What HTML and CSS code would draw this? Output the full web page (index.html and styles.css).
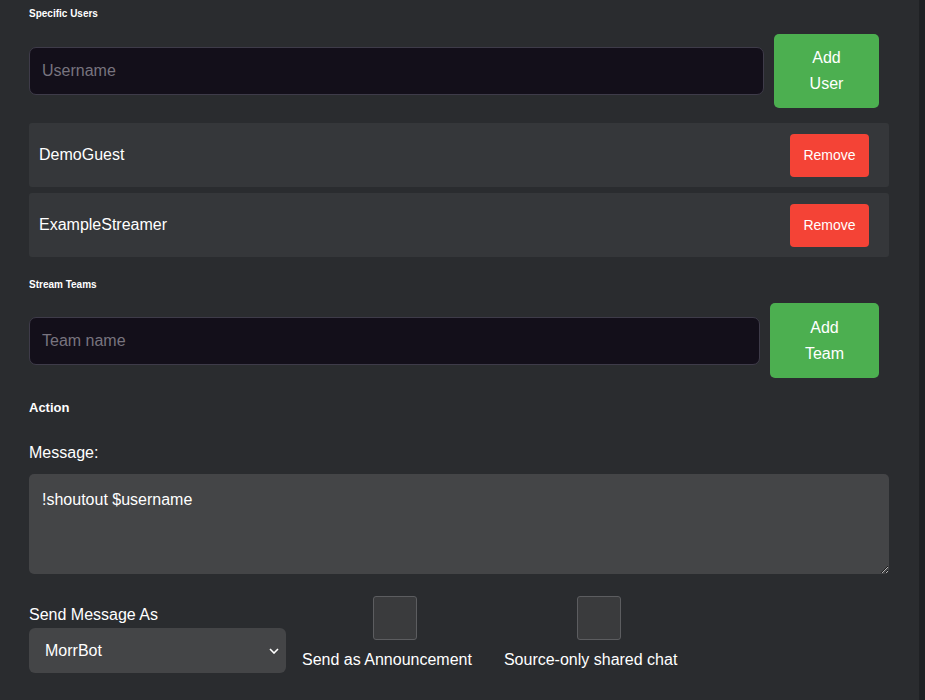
FILE: index.html
```html
<!DOCTYPE html>
<html lang="en">
<head>
    <meta charset="UTF-8">
    <title>shoutout settings</title>
    <link rel="stylesheet" href="styles.css">
</head>
<body>
    <div class="panel">
        <h4 class="section-label">Specific Users</h4>
        <div class="add-row">
            <input type="text" class="text-input" placeholder="Username">
            <button class="add-btn user-btn">Add User</button>
        </div>
        <ul class="entry-list">
            <li>
                <span>DemoGuest</span>
                <button class="remove-btn">Remove</button>
            </li>
            <li>
                <span>ExampleStreamer</span>
                <button class="remove-btn">Remove</button>
            </li>
        </ul>

        <h4 class="section-label teams-label">Stream Teams</h4>
        <div class="add-row">
            <input type="text" class="text-input" placeholder="Team name">
            <button class="add-btn team-btn">Add Team</button>
        </div>

        <h3 class="action-title">Action</h3>
        <label class="field-label" for="message">Message:</label>
        <textarea id="message" class="message-box">!shoutout $username</textarea>

        <div class="options-row">
            <div class="send-as">
                <label class="field-label" for="send-as">Send Message As</label>
                <div class="select-wrap">
                    <select id="send-as" class="select-box">
                        <option>MorrBot</option>
                    </select>
                    <svg class="chevron" width="10" height="6" viewBox="0 0 10 6">
                        <path d="M1 1l4 4 4-4" fill="none" stroke="#fff" stroke-width="1.6"/>
                    </svg>
                </div>
            </div>
            <label class="check-group">
                <input type="checkbox" class="check-box">
                <span>Send as Announcement</span>
            </label>
            <label class="check-group">
                <input type="checkbox" class="check-box">
                <span>Source-only shared chat</span>
            </label>
        </div>
    </div>
</body>
</html>
```

FILE: styles.css
```css
/*reset*/
* {
    padding: 0;
    margin: 0;
    box-sizing: border-box;
}
li {
    list-style: none;
}

/*default*/
body {
    font: 16px/1.2 "Liberation Sans", Arial, sans-serif;
    color: #fff;
    background-color: #1f2124;
    height: 700px;
    overflow: hidden;
}

/*main*/
.panel {
    width: 919px;
    height: 700px;
    background-color: #2a2c2f;
    padding: 8px 30px 0 29px;
}
.section-label {
    font-size: 10px;
    line-height: 12px;
    font-weight: bold;
    margin-bottom: 14px;
}
.teams-label {
    margin: 22px 0 12px;
}
.add-row {
    display: flex;
    align-items: center;
    width: 850px;
}
.text-input {
    flex: 1;
    height: 48px;
    background-color: #130f1a;
    border: 1px solid #3e3b49;
    border-radius: 7px;
    padding: 0 12px;
    font: 16px "Liberation Sans", Arial, sans-serif;
    color: #fff;
    outline: none;
}
.text-input::placeholder {
    color: #78747f;
}
.add-btn {
    margin-left: 10px;
    height: 74px;
    border: none;
    border-radius: 5px;
    background-color: #4caf50;
    color: #fff;
    font: 16px/26px "Liberation Sans", Arial, sans-serif;
    padding: 0 28px;
    text-align: center;
    cursor: pointer;
}
.user-btn {
    width: 105px;
}
.team-btn {
    width: 109px;
    height: 75px;
}
.entry-list {
    margin-top: 15px;
}
.entry-list li {
    display: flex;
    align-items: center;
    justify-content: space-between;
    height: 64px;
    margin-bottom: 6px;
    padding: 0 20px 0 10px;
    background-color: #35373a;
    border-radius: 3px;
}
.remove-btn {
    width: 79px;
    height: 43px;
    border: none;
    border-radius: 4px;
    background-color: #f44336;
    color: #fff;
    font: 14px "Liberation Sans", Arial, sans-serif;
    cursor: pointer;
}
.action-title {
    font-size: 13px;
    line-height: 16px;
    margin: 22px 0 28px;
}
.field-label {
    display: block;
    line-height: 18px;
}
.message-box {
    display: block;
    width: 860px;
    height: 100px;
    margin-top: 12px;
    background-color: #444547;
    border: none;
    border-radius: 5px;
    padding: 16px 13px;
    color: #fff;
    font: 16px/1.2 "Liberation Sans", Arial, sans-serif;
    outline: none;
}
.options-row {
    display: flex;
    align-items: flex-end;
    margin-top: 22px;
}
.send-as .field-label {
    margin-bottom: 4px;
}
.select-wrap {
    position: relative;
}
.select-box {
    display: block;
    width: 257px;
    height: 45px;
    appearance: none;
    background-color: #444547;
    border: none;
    border-radius: 6px;
    padding-left: 16px;
    color: #fff;
    font: 16px "Liberation Sans", Arial, sans-serif;
    outline: none;
}
.chevron {
    position: absolute;
    right: 7px;
    top: 20px;
}
.check-group {
    display: flex;
    flex-direction: column;
    align-items: center;
    margin: 0 16px 4px;
}
.check-group span {
    margin-top: 11px;
    line-height: 18px;
}
.check-box {
    appearance: none;
    width: 44px;
    height: 44px;
    margin-left: 16px;
    background-color: #3a3b3d;
    border: 1px solid #5c5d60;
    border-radius: 3px;
    cursor: pointer;
}
```
